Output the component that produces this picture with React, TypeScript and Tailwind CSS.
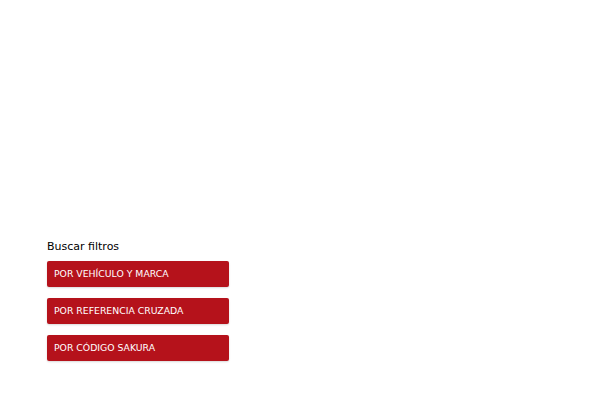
export default function App() {
  const options = ["POR VEHÍCULO Y MARCA", "POR REFERENCIA CRUZADA", "POR CÓDIGO SAKURA"];
  return (
    <div className="w-[600px] h-[400px] bg-white font-['DejaVu_Sans',sans-serif]">
      <div className="pl-[47px] pt-[239px] w-[229px] box-content">
        <div className="text-[11px] leading-[16px] text-black mb-[6px]">Buscar filtros</div>
        <div className="flex flex-col gap-[11px]">
          {options.map(o => (
            <button
              key={o}
              className="h-[26px] w-[182px] bg-[#b5121b] rounded-[2px] text-left pl-[7px] text-white text-[9.3px] shadow-[0_1px_2px_rgba(0,0,0,0.15)]"
            >
              {o}
            </button>
          ))}
        </div>
      </div>
    </div>
  );
}
